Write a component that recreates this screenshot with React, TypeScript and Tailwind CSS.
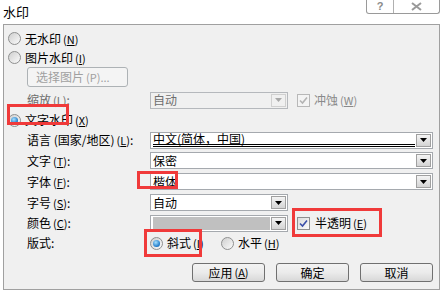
import * as React from "react";

const font = "font-['Noto_Sans_CJK_SC','Noto_Sans_CJK_JP',sans-serif]";

function Radio({ checked }: { checked?: boolean }) {
  return (
    <span className="flex h-[13px] w-[13px] shrink-0 items-center justify-center rounded-full border border-[#8e8f8f] bg-linear-to-br from-[#cfcfcf] to-[#fbfbfb]">
      {checked && (
        <span className="h-[7px] w-[7px] rounded-full bg-[radial-gradient(circle_at_40%_35%,#a6e0ff,#1c78c8_70%,#0d4f8c)]" />
      )}
    </span>
  );
}

function Check({ disabled }: { disabled?: boolean }) {
  return (
    <span
      className={
        "flex h-[13px] w-[13px] shrink-0 items-center justify-center border " +
        (disabled
          ? "border-[#b8b8b8] bg-[#f4f4f4]"
          : "border-[#8e8f8f] bg-linear-to-br from-[#dcdcdc] to-[#fbfbfb]")
      }
    >
      <svg width="9" height="9" viewBox="0 0 9 9">
        <path
          d="M1 4.5 L3.5 7 L8 1.5"
          fill="none"
          stroke={disabled ? "#b4b4b4" : "#3b4fa8"}
          strokeWidth="1.6"
        />
      </svg>
    </span>
  );
}

function Arrow({ disabled }: { disabled?: boolean }) {
  return (
    <span
      className={
        "m-[1px] flex h-[13px] w-[15px] shrink-0 items-center justify-center border " +
        (disabled
          ? "border-[#d0d0d0] bg-[#f0f0f0]"
          : "border-[#a0a0a0] bg-linear-to-b from-[#f4f4f4] to-[#d4d4d4]")
      }
    >
      <svg width="7" height="4" viewBox="0 0 7 4">
        <path d="M0 0 H7 L3.5 4 Z" fill={disabled ? "#a8a8a8" : "#000"} />
      </svg>
    </span>
  );
}

function Combo({
  wide,
  disabled,
  children,
}: {
  wide?: boolean;
  disabled?: boolean;
  children?: React.ReactNode;
}) {
  return (
    <div
      className={
        "flex h-[17px] items-center border " +
        (wide ? "w-[283px] " : "w-[138px] ") +
        (disabled ? "border-[#b5b8bc] bg-[#f0f0f0]" : "border-[#a5a9ae] bg-white")
      }
    >
      <div
        className={
          "flex h-full flex-1 items-center pl-[2px] " +
          (disabled ? "text-[#6d6d6d]" : "text-black")
        }
      >
        {children}
      </div>
      <Arrow disabled={disabled} />
    </div>
  );
}

function Key({ k }: { k: string }) {
  return (
    <span className="ml-[2px] text-[11px]">
      (<span className="underline">{k}</span>)
    </span>
  );
}

function Field({ label, children, h }: { label: React.ReactNode; children: React.ReactNode; h: string }) {
  return (
    <div className={"flex items-center " + h}>
      <div className="w-[146px] shrink-0 pl-[23px]">{label}</div>
      {children}
    </div>
  );
}

function Btn({ children }: { children: React.ReactNode }) {
  return (
    <div className="flex h-[19px] w-[73px] items-center justify-center rounded-[3px] border border-[#707070] bg-linear-to-b from-[#f3f3f3] via-[#ebebeb] to-[#d8d8d8]">
      {children}
    </div>
  );
}

function Mark({ className }: { className: string }) {
  return <div className={"absolute border-[3px] border-[#f03a3a] " + className} />;
}

export default function App() {
  return (
    <div className={"relative h-[293px] w-[443px] overflow-hidden bg-white text-[12px] leading-none text-black " + font}>
      {/* title bar */}
      <div className="flex h-[24px] items-start justify-between">
        <div className="pl-[3px] pt-[5px] text-[13px]">水印</div>
        <div className="mr-[3px] flex h-[14px] w-[74px] rounded-b-[3px] border border-t-0 border-[#9a9a9a] bg-white">
          <div className="flex w-[27px] items-center justify-center border-r border-[#b0b0b0] font-['Liberation_Sans',sans-serif] text-[11px] leading-none font-bold text-[#8a8a8a]">
            ?
          </div>
          <div className="flex flex-1 items-center justify-center">
            <svg width="11" height="9" viewBox="0 0 11 9">
              <path d="M1 1 L10 8 M10 1 L1 8" stroke="#9a9a9a" strokeWidth="2" />
            </svg>
          </div>
        </div>
      </div>

      {/* body */}
      <div className="mx-[3px] flex h-[266px] flex-col border border-[#a0a0a0] bg-[#f0f0f0] pt-[4px]">
        <div className="flex h-[19px] items-center gap-[4px] pl-[4px]">
          <Radio />
          <span>
            无水印<Key k="N" />
          </span>
        </div>
        <div className="flex h-[19px] items-center gap-[4px] pl-[4px]">
          <Radio />
          <span>
            图片水印<Key k="I" />
          </span>
        </div>
        <div className="pl-[23px]">
          <div className="flex h-[20px] w-[101px] items-center rounded-[3px] border border-[#adb2b5] bg-[#f4f4f4] pl-[8px] text-[#a0a0a0]">
            选择图片<span className="ml-[2px] text-[11px]">(P)...</span>
          </div>
        </div>
        <div className="mt-[3px]">
          <Field h="h-[20px]" label={<span className="text-[#6d6d6d]">缩放<Key k="L" />:</span>}>
            <Combo disabled>自动</Combo>
            <div className="ml-[9px] flex items-center gap-[4px] text-[#8a8a8a]">
              <Check disabled />
              <span>
                冲蚀<Key k="W" />
              </span>
            </div>
          </Field>
        </div>
        <div className="flex h-[20px] items-center gap-[4px] pl-[4px]">
          <Radio checked />
          <span>
            文字水印<Key k="X" />
          </span>
        </div>
        <Field h="h-[20px]" label={<span>语言 (国家/地区)<Key k="L" />:</span>}>
          <Combo wide>
            <span className="flex h-[14px] w-full items-start border-b-[3px] border-double border-black">
              中文(简体，中国)
            </span>
          </Combo>
        </Field>
        <Field h="h-[21px]" label={<span>文字<Key k="T" />:</span>}>
          <Combo wide>保密</Combo>
        </Field>
        <Field h="h-[21px]" label={<span>字体<Key k="F" />:</span>}>
          <Combo wide>楷体</Combo>
        </Field>
        <Field h="h-[21px]" label={<span>字号<Key k="S" />:</span>}>
          <Combo>自动</Combo>
        </Field>
        <Field h="h-[20px]" label={<span>颜色<Key k="C" />:</span>}>
          <Combo>
            <span className="h-[13px] w-full bg-[#c0c0c0]" />
          </Combo>
          <div className="ml-[9px] flex items-center gap-[5px]">
            <Check />
            <span>
              半透明<Key k="E" />
            </span>
          </div>
        </Field>
        <Field h="h-[20px]" label={<span>版式:</span>}>
          <div className="flex w-[71px] items-center gap-[4px]">
            <Radio checked />
            <span>
              斜式<Key k="I" />
            </span>
          </div>
          <div className="flex items-center gap-[4px]">
            <Radio />
            <span>
              水平<Key k="H" />
            </span>
          </div>
        </Field>
        <div className="mt-[10px] flex justify-end gap-[11px] pr-[6px]">
          <Btn>
            应用<Key k="A" />
          </Btn>
          <Btn>确定</Btn>
          <Btn>取消</Btn>
        </div>
      </div>

      {/* annotation boxes */}
      <Mark className="left-[7px] top-[104px] h-[21px] w-[62px]" />
      <Mark className="left-[137px] top-[171px] h-[18px] w-[41px]" />
      <Mark className="left-[292px] top-[208px] h-[29px] w-[90px]" />
      <Mark className="left-[144px] top-[229px] h-[28px] w-[58px]" />
    </div>
  );
}
